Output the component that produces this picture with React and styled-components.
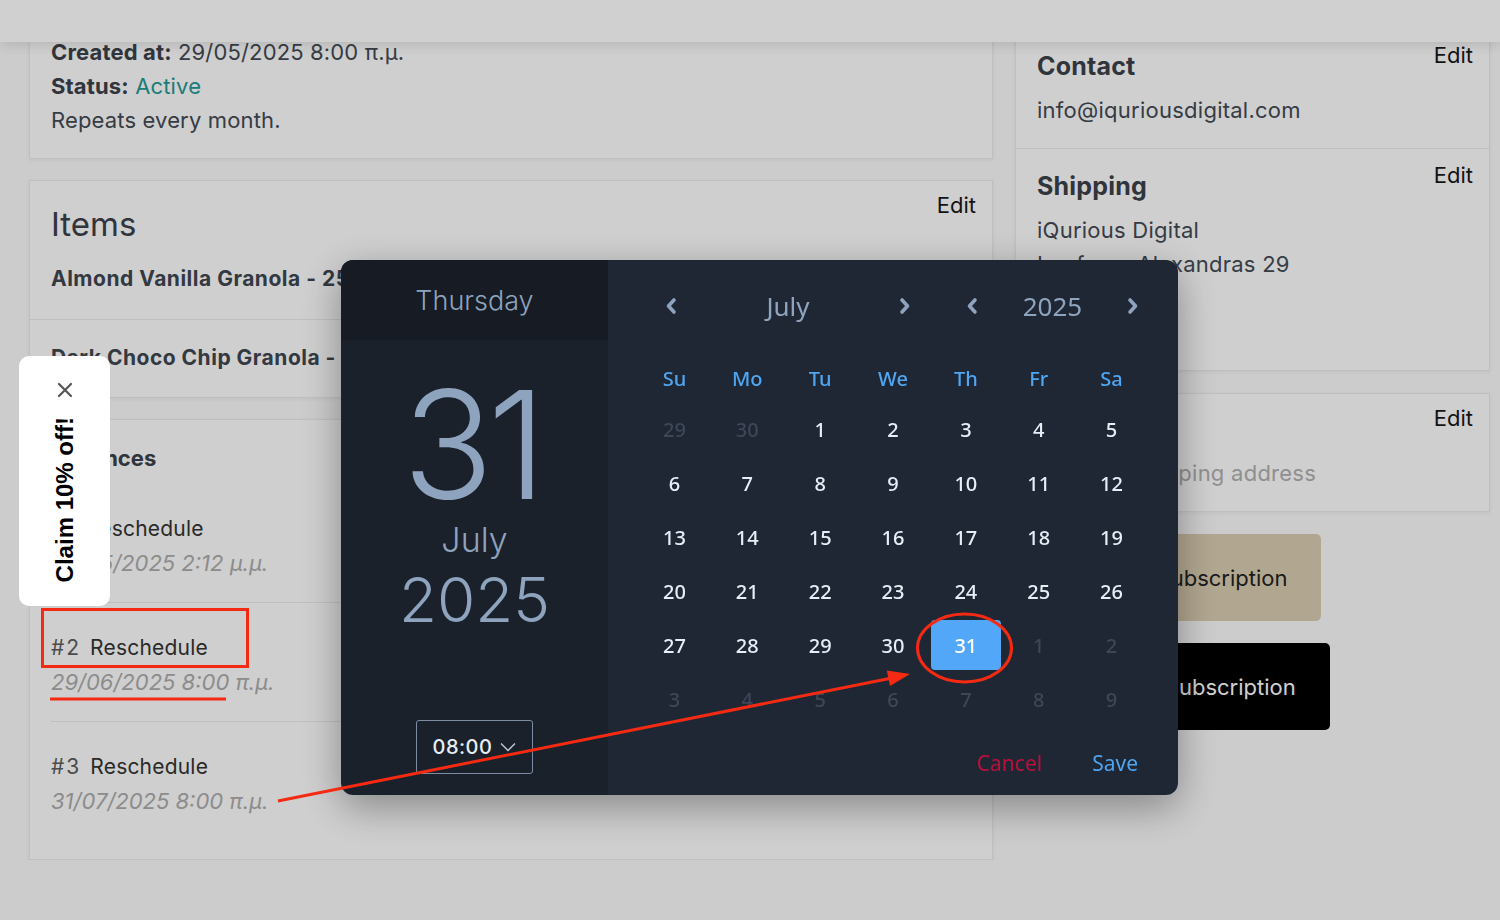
import React from "react"
import styled, { createGlobalStyle } from "styled-components"

const GlobalStyle = createGlobalStyle`
  html, body {
    margin: 0;
    padding: 0;
  }
  body {
    background: #fafafa;
    font-family: Inter, "Noto Sans", sans-serif;
    color: #434a54;
    overflow: hidden;
  }
`

const Header = styled.header`
  position: fixed;
  top: 0;
  left: 0;
  right: 0;
  height: 42px;
  background: #ffffff;
  box-shadow: 0 3px 14px rgba(0, 0, 0, 0.13);
  z-index: 2;
`

const Main = styled.main`
  display: grid;
  grid-template-columns: 964px 475px;
  column-gap: 22px;
  align-items: start;
  padding-left: 29px;
`

const Column = styled.div`
  display: flex;
  flex-direction: column;
  gap: ${(p) => p.$gap || 21}px;
`

const Card = styled.section`
  background: #fefefe;
  border: 1px solid #ebebeb;
  box-shadow: 0 1px 4px rgba(0, 0, 0, 0.06);
`

const Summary = styled.div`
  padding: 34px 21px 21px;
`

const Line = styled.div`
  font-size: 22px;
  line-height: 34px;
  letter-spacing: 0.15px;
`

const Label = styled.span`
  font-weight: 700;
  color: #3b414a;
`

const StatusText = styled.span`
  color: #249996;
`

const Section = styled.div`
  padding: ${(p) => p.$top}px 16px 21px 21px;
  border-bottom: ${(p) => (p.$divided ? "1px solid #ebebeb" : "none")};
`

const SectionHead = styled.div`
  display: flex;
  justify-content: space-between;
  align-items: flex-start;
`

const SectionTitle = styled.h3`
  margin: 0;
  padding-top: 11px;
  font-size: 25px;
  line-height: 30px;
  font-weight: 700;
  letter-spacing: 0.2px;
  color: #3b414a;
`

const BigTitle = styled.h2`
  margin: 0;
  padding-top: 15px;
  font-size: 33px;
  line-height: 38px;
  font-weight: 400;
  color: #3b414a;
`

const EditLink = styled.a`
  font-size: 22px;
  line-height: 30px;
  color: #181818;
  cursor: pointer;
`

const SectionBody = styled.div`
  margin-top: 12px;
  font-size: 22px;
  line-height: 34px;
  letter-spacing: 0.25px;
  color: ${(p) => (p.$muted ? "#b0b0b0" : "#434a54")};
`

const ItemList = styled.div`
  margin-top: -21px;
`

const Item = styled.div`
  padding: 21px 21px 25px;
  font-size: 21px;
  line-height: 30px;
  font-weight: 700;
  letter-spacing: 0.5px;
  color: #3f4650;
  & + & {
    padding: 23px 21px 24px;
    border-top: 1px solid #ebebeb;
  }
`

const ListTitle = styled.h3`
  margin: 0 0 11px;
  padding: 23px 21px 0;
  font-size: 22px;
  line-height: 30px;
  font-weight: 700;
  color: #3b414a;
`

const Entries = styled.div`
  padding: 0 21px 19px;
`

const Entry = styled.div`
  padding: 28px 0 22px;
  & + & {
    border-top: 1px solid #ebebeb;
  }
`

const EntryTitle = styled.div`
  font-size: 21px;
  line-height: 34px;
  letter-spacing: 0.2px;
  color: #333333;
`

const EntryNo = styled.span`
  color: #5c5c5c;
  letter-spacing: 2px;
  margin-right: 9px;
`

const EntryDate = styled.div`
  font-size: 22px;
  line-height: 34px;
  font-style: italic;
  color: #acacac;
`

const ActionButton = styled.button`
  align-self: flex-start;
  height: 87px;
  padding: 0 34px 0 74px;
  border: none;
  border-radius: 5px;
  font-family: inherit;
  font-size: 22px;
  background: ${(p) => (p.$dark ? "#000000" : "#dacdb1")};
  color: ${(p) => (p.$dark ? "#ffffff" : "#222222")};
`

const Backdrop = styled.div`
  position: fixed;
  inset: 0;
  background: rgba(0, 0, 0, 0.185);
  z-index: 10;
`

const ClaimTab = styled.aside`
  position: fixed;
  left: 19px;
  top: 356px;
  width: 91px;
  height: 250px;
  box-sizing: border-box;
  padding-top: 26px;
  background: #ffffff;
  border-radius: 10px;
  z-index: 15;
  display: flex;
  flex-direction: column;
  align-items: center;
  gap: 19px;
`

const ClaimText = styled.span`
  writing-mode: vertical-rl;
  transform: rotate(180deg);
  font-family: "Liberation Sans", Arial, sans-serif;
  font-size: 24px;
  font-weight: 700;
  color: #000000;
  white-space: nowrap;
`

const Picker = styled.div`
  position: fixed;
  left: 341px;
  top: 260px;
  width: 837px;
  height: 535px;
  display: grid;
  grid-template-columns: 267px 1fr;
  border-radius: 12px;
  overflow: hidden;
  z-index: 20;
  box-shadow: 0 12px 40px rgba(0, 0, 0, 0.35);
`

const DatePane = styled.div`
  display: flex;
  flex-direction: column;
  background: #1b212b;
  color: #8ea3bd;
`

const WeekdayBar = styled.div`
  height: 80px;
  line-height: 82px;
  text-align: center;
  background: #161b24;
  font-size: 27px;
  font-weight: 300;
`

const DateBody = styled.div`
  flex: 1;
  display: flex;
  flex-direction: column;
  align-items: center;
  padding-bottom: 21px;
`

const BigDay = styled.div`
  margin-top: 30px;
  font-size: 150px;
  line-height: 150px;
  font-weight: 300;
  letter-spacing: -6px;
  padding-right: 6px;
`

const BigMonth = styled.div`
  font-size: 34px;
  line-height: 40px;
  font-weight: 300;
`

const BigYear = styled.div`
  margin-top: 5px;
  font-size: 62px;
  line-height: 70px;
  font-weight: 300;
`

const TimeBox = styled.div`
  margin-top: auto;
  width: 117px;
  height: 54px;
  box-sizing: border-box;
  border: 1px solid #7d8ca2;
  border-radius: 3px;
  display: flex;
  align-items: center;
  justify-content: center;
  gap: 8px;
  font-size: 20px;
  font-weight: 500;
  letter-spacing: 0.5px;
  color: #e8eef6;
`

const CalendarPane = styled.div`
  display: flex;
  flex-direction: column;
  padding: 16px 30px 0;
  background: #1f2734;
  font-family: "Noto Sans", sans-serif;
`

const NavRow = styled.div`
  height: 60px;
  display: flex;
  align-items: center;
  gap: 43px;
  padding-left: 21px;
`

const NavGroup = styled.div`
  width: ${(p) => p.$width}px;
  display: flex;
  align-items: center;
`

const NavArrow = styled.span`
  width: 24px;
  display: flex;
  justify-content: center;
`

const NavLabel = styled.span`
  flex: 1;
  text-align: center;
  font-size: 26px;
  color: #8ea3bd;
`

const WeekGrid = styled.div`
  margin-top: ${(p) => p.$top || 0}px;
  display: grid;
  grid-template-columns: repeat(7, 1fr);
  grid-auto-rows: ${(p) => p.$row}px;
`

const WeekdayCell = styled.div`
  display: flex;
  align-items: center;
  justify-content: center;
  font-size: 20px;
  font-weight: 500;
  color: #4fa6f2;
`

const DayCell = styled.div`
  margin: 2px 1.5px;
  display: flex;
  align-items: center;
  justify-content: center;
  border-radius: 4px;
  font-size: 20px;
  font-weight: 500;
  color: ${(p) => (p.$selected ? "#ffffff" : p.$muted ? "#3d4757" : "#e7eef7")};
  background: ${(p) => (p.$selected ? "#52a7f8" : "transparent")};
`

const PickerFooter = styled.div`
  margin-top: 22px;
  padding-right: 10px;
  display: flex;
  justify-content: flex-end;
  gap: 50px;
  font-size: 21px;
  line-height: 30px;
`

const FooterAction = styled.span`
  color: ${(p) => (p.$danger ? "#b8113c" : "#4ea4ef")};
`

const Annotations = styled.svg`
  position: fixed;
  left: 0;
  top: 0;
  z-index: 30;
  pointer-events: none;
`

const Chevron = ({ dir }) => (
  <svg width="12" height="18" viewBox="0 0 12 18">
    <path
      d={dir === "left" ? "M9 3 L3.5 9 L9 15" : "M3 3 L8.5 9 L3 15"}
      fill="none"
      stroke="#8ea3bd"
      strokeWidth="3.6"
      strokeLinecap="round"
      strokeLinejoin="round"
    />
  </svg>
)

const weekdays = ["Su", "Mo", "Tu", "We", "Th", "Fr", "Sa"]

const days = [
  ...[29, 30].map((d) => ({ d, muted: true })),
  ...Array.from({ length: 31 }, (_, i) => ({ d: i + 1, selected: i === 30 })),
  ...Array.from({ length: 9 }, (_, i) => ({ d: i + 1, muted: true })),
]

const entries = [
  { no: "#1", date: "29/05/2025 2:12 μ.μ." },
  { no: "#2", date: "29/06/2025 8:00 π.μ." },
  { no: "#3", date: "31/07/2025 8:00 π.μ." },
]

const App = () => {
  return (
    <>
      <GlobalStyle />
      <Header />
      <Main>
        <Column>
          <Card>
            <Summary>
              <Line>
                <Label>Created at:</Label> 29/05/2025 8:00 π.μ.
              </Line>
              <Line>
                <Label>Status:</Label> <StatusText>Active</StatusText>
              </Line>
              <Line>Repeats every month.</Line>
            </Summary>
          </Card>
          <Card>
            <Section $top={9}>
              <SectionHead>
                <BigTitle>Items</BigTitle>
                <EditLink>Edit</EditLink>
              </SectionHead>
            </Section>
            <ItemList>
              <Item>Almond Vanilla Granola - 250g</Item>
              <Item>Dark Choco Chip Granola - 250g</Item>
            </ItemList>
          </Card>
          <Card>
            <ListTitle>Instances</ListTitle>
            <Entries>
              {entries.map((e) => (
                <Entry key={e.no}>
                  <EntryTitle>
                    <EntryNo>{e.no}</EntryNo>Reschedule
                  </EntryTitle>
                  <EntryDate>{e.date}</EntryDate>
                </Entry>
              ))}
            </Entries>
          </Card>
        </Column>
        <Column $gap={22}>
          <Card>
            <Section $top={39} $divided>
              <SectionHead>
                <SectionTitle>Contact</SectionTitle>
                <EditLink>Edit</EditLink>
              </SectionHead>
              <SectionBody>info@iquriousdigital.com</SectionBody>
            </Section>
            <Section $top={11}>
              <SectionHead>
                <SectionTitle>Shipping</SectionTitle>
                <EditLink>Edit</EditLink>
              </SectionHead>
              <SectionBody>
                iQurious Digital
                <br />
                Leoforos Alexandras 29
                <br />
                Athens
                <br />
                Greece
              </SectionBody>
            </Section>
          </Card>
          <Card>
            <Section $top={9}>
              <SectionHead>
                <SectionTitle>Billing</SectionTitle>
                <EditLink>Edit</EditLink>
              </SectionHead>
              <SectionBody $muted>Same as shipping address</SectionBody>
            </Section>
          </Card>
          <ActionButton>Pause subscription</ActionButton>
          <ActionButton $dark>Cancel subscription</ActionButton>
        </Column>
      </Main>

      <Backdrop />

      <ClaimTab>
        <svg width="16" height="16" viewBox="0 0 16 16">
          <path d="M2 2 L14 14 M14 2 L2 14" stroke="#555" strokeWidth="2.2" strokeLinecap="round" />
        </svg>
        <ClaimText>Claim 10% off!</ClaimText>
      </ClaimTab>

      <Picker>
        <DatePane>
          <WeekdayBar>Thursday</WeekdayBar>
          <DateBody>
            <BigDay>31</BigDay>
            <BigMonth>July</BigMonth>
            <BigYear>2025</BigYear>
            <TimeBox>
              08:00
              <svg width="16" height="10" viewBox="0 0 16 10">
                <path d="M1 1.5 L8 8.5 L15 1.5" fill="none" stroke="#c3ccd9" strokeWidth="1.3" />
              </svg>
            </TimeBox>
          </DateBody>
        </DatePane>
        <CalendarPane>
          <NavRow>
            <NavGroup $width={258}>
              <NavArrow><Chevron dir="left" /></NavArrow>
              <NavLabel>July</NavLabel>
              <NavArrow><Chevron dir="right" /></NavArrow>
            </NavGroup>
            <NavGroup $width={185}>
              <NavArrow><Chevron dir="left" /></NavArrow>
              <NavLabel>2025</NavLabel>
              <NavArrow><Chevron dir="right" /></NavArrow>
            </NavGroup>
          </NavRow>
          <WeekGrid $row={48} $top={18}>
            {weekdays.map((w) => (
              <WeekdayCell key={w}>{w}</WeekdayCell>
            ))}
          </WeekGrid>
          <WeekGrid $row={54}>
            {days.map((x, i) => (
              <DayCell key={i} $muted={x.muted} $selected={x.selected}>
                {x.d}
              </DayCell>
            ))}
          </WeekGrid>
          <PickerFooter>
            <FooterAction $danger>Cancel</FooterAction>
            <FooterAction>Save</FooterAction>
          </PickerFooter>
        </CalendarPane>
      </Picker>

      <Annotations width="1500" height="920" viewBox="0 0 1500 920">
        <g stroke="#f42a12" strokeWidth="3" fill="none">
          <rect x="42.5" y="609.5" width="205" height="57" />
          <line x1="50" y1="699" x2="226" y2="699" />
          <line x1="278" y1="801" x2="892" y2="678" />
          <ellipse cx="964.5" cy="648" rx="47" ry="34" />
        </g>
        <polygon points="910,674 886.8,670.5 890,686.1" fill="#f42a12" />
      </Annotations>
    </>
  )
}

export default App
